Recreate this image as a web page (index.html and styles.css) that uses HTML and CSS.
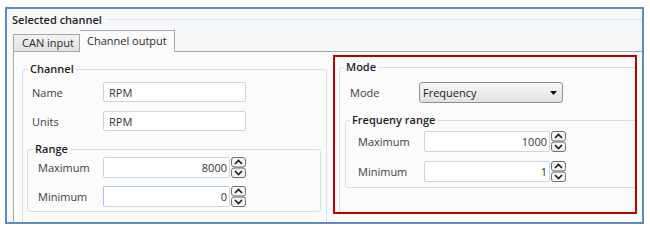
FILE: index.html
```html
<!DOCTYPE html>
<html lang="en">
  <head>
    <meta charset="utf-8" />
    <title>Selected channel</title>
    <link rel="stylesheet" href="styles.css">
  </head>
  <body>
    <div class="frame">
      <div class="frame-head"><span>Selected channel</span></div>
      <div class="tabs">
        <div class="tab">CAN input</div>
        <div class="tab active">Channel output</div>
      </div>
      <div class="panel">
        <fieldset class="group channel">
          <legend>Channel</legend>
          <div class="rows channel-rows">
            <label>Name</label>
            <input class="field" type="text" value="RPM" />
            <label>Units</label>
            <input class="field" type="text" value="RPM" />
          </div>
          <fieldset class="group range">
            <legend>Range</legend>
            <div class="rows range-rows">
              <label>Maximum</label>
              <div class="spin">
                <input class="field num" type="text" value="8000" />
                <svg class="spinner" width="15" height="21" viewBox="0 0 15 21">
                  <rect x="0.5" y="0.5" width="14" height="9.5" rx="2.5" />
                  <rect x="0.5" y="11" width="14" height="9.5" rx="2.5" />
                  <path d="M4 7 L7.5 3.5 L11 7" />
                  <path d="M4 14 L7.5 17.5 L11 14" />
                </svg>
              </div>
              <label>Minimum</label>
              <div class="spin">
                <input class="field num focused" type="text" value="0" />
                <svg class="spinner" width="15" height="21" viewBox="0 0 15 21">
                  <rect x="0.5" y="0.5" width="14" height="9.5" rx="2.5" />
                  <rect x="0.5" y="11" width="14" height="9.5" rx="2.5" />
                  <path d="M4 7 L7.5 3.5 L11 7" />
                  <path d="M4 14 L7.5 17.5 L11 14" />
                </svg>
              </div>
            </div>
          </fieldset>
        </fieldset>
        <div class="highlight">
          <fieldset class="group mode">
            <legend>Mode</legend>
            <div class="rows mode-rows">
              <label>Mode</label>
              <div class="select">
                <span>Frequency</span>
                <svg width="7" height="4" viewBox="0 0 7 4"><polygon points="0,0 7,0 3.5,4" /></svg>
              </div>
            </div>
            <fieldset class="group freq">
              <legend>Frequeny range</legend>
              <div class="rows freq-rows">
                <label>Maximum</label>
                <div class="spin">
                  <input class="field num" type="text" value="1000" />
                  <svg class="spinner" width="15" height="21" viewBox="0 0 15 21">
                    <rect x="0.5" y="0.5" width="14" height="9.5" rx="2.5" />
                    <rect x="0.5" y="11" width="14" height="9.5" rx="2.5" />
                    <path d="M4 7 L7.5 3.5 L11 7" />
                    <path d="M4 14 L7.5 17.5 L11 14" />
                  </svg>
                </div>
                <label>Minimum</label>
                <div class="spin">
                  <input class="field num" type="text" value="1" />
                  <svg class="spinner" width="15" height="21" viewBox="0 0 15 21">
                    <rect x="0.5" y="0.5" width="14" height="9.5" rx="2.5" />
                    <rect x="0.5" y="11" width="14" height="9.5" rx="2.5" />
                    <path d="M4 7 L7.5 3.5 L11 7" />
                    <path d="M4 14 L7.5 17.5 L11 14" />
                  </svg>
                </div>
              </div>
            </fieldset>
          </fieldset>
        </div>
      </div>
    </div>
  </body>
</html>
```

FILE: styles.css
```css
* {
  box-sizing: border-box;
}

body {
  margin: 0;
  background-color: #ffffff;
  font-family: "Open Sans", sans-serif;
  font-size: 11px;
  color: #3a3a3a;
}

.frame {
  display: flex;
  flex-direction: column;
  width: 639px;
  height: 217px;
  margin: 7px 0 0 5px;
  border: 2px solid #5b8bc8;
  background-color: #f7f8f9;
  overflow: hidden;
}

.frame-head {
  display: flex;
  align-items: center;
  height: 21px;
  padding-left: 5px;
  font-weight: 600;
  color: #1f1f1f;
}

.frame-head::after {
  content: "";
  flex: 1;
  margin-left: 5px;
  border-top: 1px solid #e0e6ed;
}

.tabs {
  display: flex;
  align-items: flex-end;
  height: 21px;
  padding-left: 6px;
}

.tab {
  height: 17px;
  padding: 0 5px 0 8px;
  line-height: 16px;
  border: 1px solid #a7a7a7;
  border-bottom: none;
  background: linear-gradient(#f3f3f3, #e2e2e2);
  color: #2a2a2a;
}

.tab.active {
  position: relative;
  height: 22px;
  margin-bottom: -1px;
  padding: 0 7px;
  line-height: 20px;
  border-left: none;
  background: #fbfbfb;
}

.panel {
  flex: 1;
  display: flex;
  align-items: stretch;
  margin-left: 6px;
  border-top: 1px solid #a7a7a7;
  border-left: 1px solid #a7a7a7;
  box-shadow: inset 2px 0 0 #ffffff;
  background-color: #fbfbfb;
}

fieldset {
  min-width: 0;
  margin: 0;
}

.group {
  border: 1px solid #d9dfe7;
  border-radius: 3px;
}

legend {
  padding: 0 2px;
  line-height: 14px;
  font-weight: 600;
  color: #1f1f1f;
}

.rows {
  display: grid;
  align-items: center;
}

label {
  color: #404040;
}

.field {
  height: 20px;
  padding: 0 5px;
  border: 1px solid #cfd3da;
  border-radius: 2px;
  background-color: #ffffff;
  font-family: "Open Sans", sans-serif;
  font-size: 11px;
  color: #333333;
  outline: none;
}

.num {
  height: 21px;
  padding: 0 2px 0 5px;
  text-align: right;
}

.focused {
  border-color: #a9c6ea #cfd3da #cfd3da #a9c6ea;
}

.spin {
  display: flex;
  gap: 1px;
  align-items: center;
}

.spinner rect {
  fill: #f4f4f4;
  stroke: #6f6f6f;
  stroke-width: 1;
}

.spinner path {
  fill: none;
  stroke: #1c1c1c;
  stroke-width: 1.6;
}

/* left column */
.channel {
  width: 305px;
  margin: 10px 0 -8px 8px;
  padding: 0 5px;
}

.channel-rows {
  grid-template-columns: 71px 143px;
  row-gap: 9px;
  padding: 6px 0 0 4px;
}

.range {
  margin: 11px 0 0 -1px;
  padding: 0 5px 4px 5px;
}

.range-rows {
  grid-template-columns: 65px 143px;
  row-gap: 8px;
  padding: 1px 0 0 5px;
}

.range-rows .field {
  width: 127px;
}

/* right column */
.highlight {
  display: flex;
  flex-direction: column;
  width: 304px;
  height: 159px;
  margin: 3px 0 0 6px;
  border: 2px solid #c00000;
  background-color: #fbfbfb;
  overflow: hidden;
}

.mode {
  flex: 1;
  margin: 3px -8px -8px 4px;
  padding: 0 4px;
}

.mode-rows {
  grid-template-columns: 69px 144px;
  padding: 8px 0 0 6px;
}

.select {
  display: flex;
  align-items: center;
  justify-content: space-between;
  height: 21px;
  padding: 0 5px 0 3px;
  border: 1px solid #8d9298;
  border-radius: 3px;
  background: linear-gradient(#f8f8f8, #e1e1e1);
  color: #222222;
}

.select polygon {
  fill: #111111;
}

.freq {
  margin: 10px -8px 0 1px;
  padding: 0 4px 5px 4px;
}

.freq-rows {
  grid-template-columns: 66px 142px;
  row-gap: 9px;
  padding: 4px 0 0 8px;
}

.freq-rows .field {
  width: 126px;
}
```
